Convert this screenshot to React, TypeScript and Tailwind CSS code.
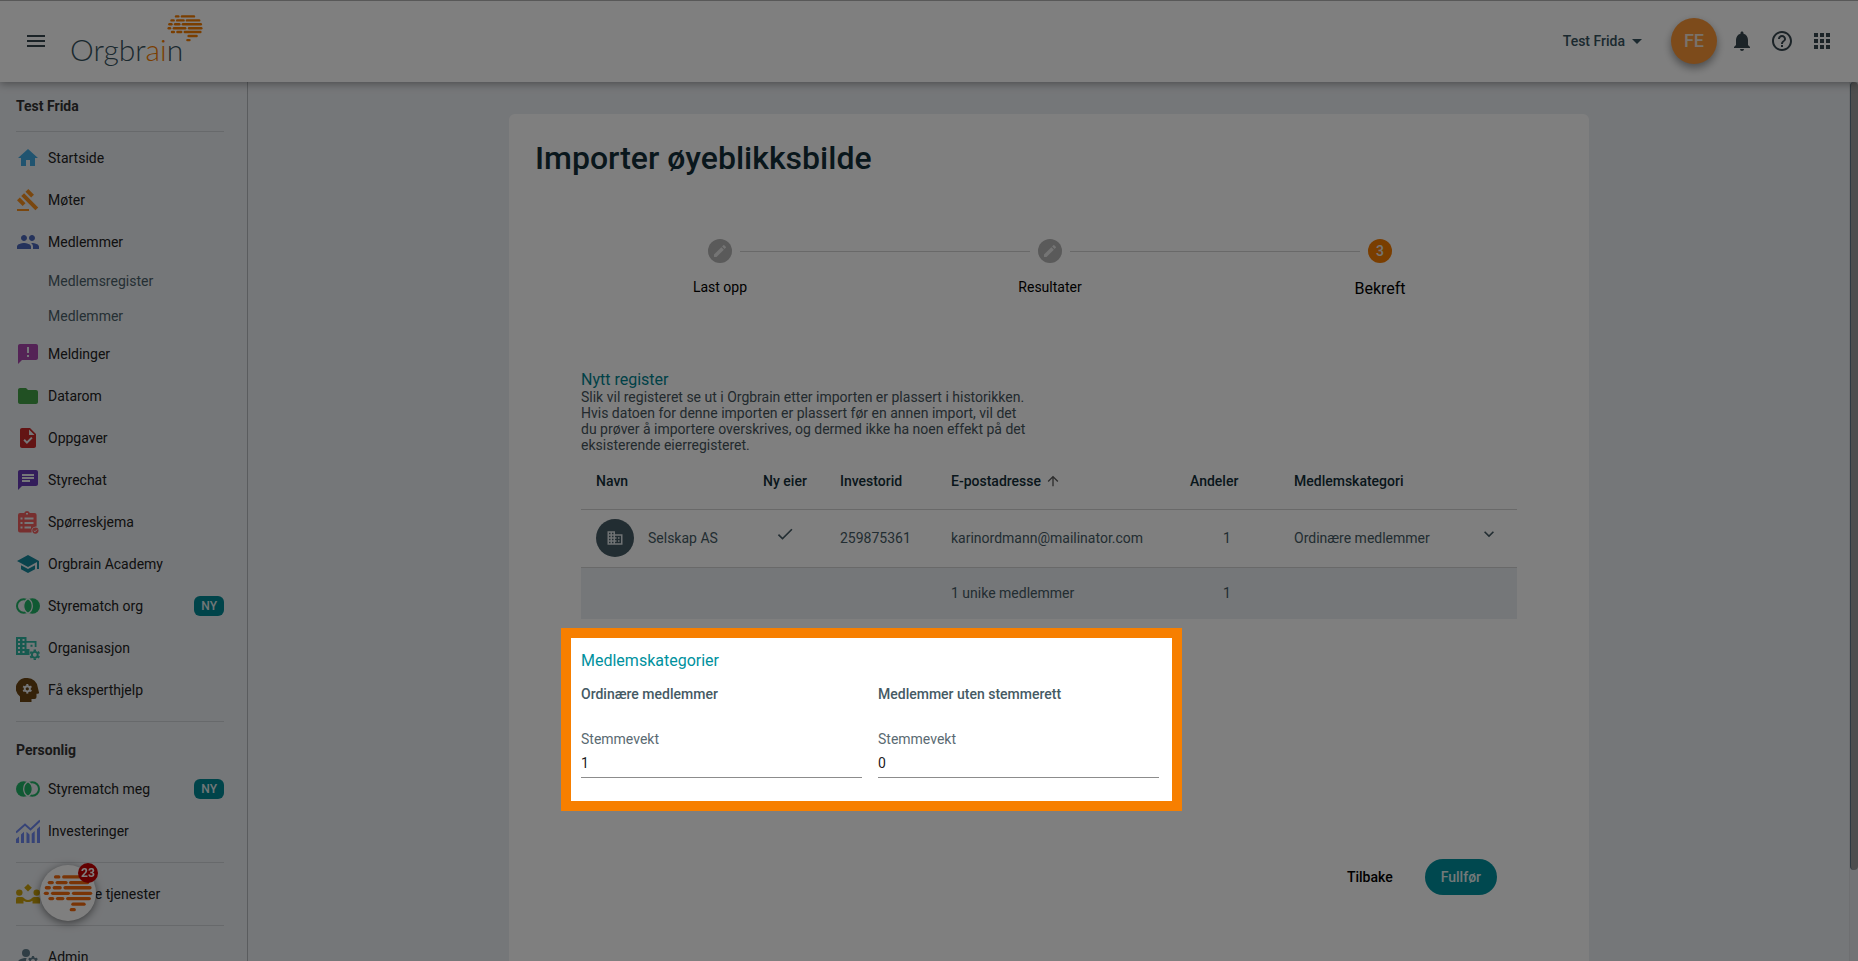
import { useState } from 'react'
import type { ComponentType, ReactNode } from 'react'
import {
  MdApps,
  MdArrowDropDown,
  MdArrowUpward,
  MdAnnouncement,
  MdChat,
  MdCheck,
  MdCreate,
  MdDomain,
  MdExpandMore,
  MdFolder,
  MdGavel,
  MdHelpOutline,
  MdHome,
  MdManageAccounts,
  MdMenu,
  MdNotifications,
  MdPeople,
  MdSchool,
  MdTask,
} from 'react-icons/md'

type Icon = ComponentType<{ className?: string }>

interface NavItem {
  label: string
  icon: Icon
  color: string
  isNew?: boolean
  children?: string[]
}

const ORG_NAV: NavItem[] = [
  { label: 'Startside', icon: MdHome, color: 'text-[#40a9e0]' },
  { label: 'Møter', icon: MdGavel, color: 'text-[#f58f1e]' },
  {
    label: 'Medlemmer',
    icon: MdPeople,
    color: 'text-[#4a67b8]',
    children: ['Medlemsregister', 'Medlemmer'],
  },
  { label: 'Meldinger', icon: MdAnnouncement, color: 'text-[#a846ac]' },
  { label: 'Datarom', icon: MdFolder, color: 'text-[#43a047]' },
  { label: 'Oppgaver', icon: MdTask, color: 'text-[#c62828]' },
  { label: 'Styrechat', icon: MdChat, color: 'text-[#673ab7]' },
  { label: 'Spørreskjema', icon: SurveyIcon, color: 'text-[#ef5f5f]' },
  { label: 'Orgbrain Academy', icon: MdSchool, color: 'text-[#14869a]' },
  { label: 'Styrematch org', icon: MatchIcon, color: 'text-[#21b266]', isNew: true },
  { label: 'Organisasjon', icon: OrgSettingsIcon, color: 'text-[#2fb5a0]' },
  { label: 'Få eksperthjelp', icon: ExpertIcon, color: 'text-[#6b4412]' },
]

const PERSONAL_NAV: NavItem[] = [
  { label: 'Styrematch meg', icon: MatchMeIcon, color: 'text-[#21b266]', isNew: true },
  { label: 'Investeringer', icon: InvestIcon, color: 'text-[#6c87ee]' },
]

const STEPS = [
  { label: 'Last opp', done: true },
  { label: 'Resultater', done: true },
  { label: 'Bekreft', done: false },
]

const CATEGORIES = [
  { id: 'ordinary', name: 'Ordinære medlemmer', weight: '1' },
  { id: 'non-voting', name: 'Medlemmer uten stemmerett', weight: '0' },
]

export default function App() {
  return (
    <div className="flex h-screen flex-col overflow-hidden bg-[#ebeef2] font-[Roboto,sans-serif] text-sm text-[#333]">
      <Header />
      <div className="flex min-h-0 flex-1">
        <Sidebar />
        <main className="flex min-w-0 flex-1 justify-center overflow-hidden pt-8 pl-px">
          <ImportCard />
        </main>
        <div className="w-[9px] shrink-0 border-l border-[#dcdfe2] bg-[#e4e7ea]">
          <div className="h-[788px] rounded-md border-l border-[#5f7280] bg-[#9c9c9c]" />
        </div>
      </div>
      <ChatBubble />
      {/* Dims everything except the highlighted section */}
      <div className="pointer-events-none fixed inset-0 z-40 bg-black/50" />
    </div>
  )
}

function Header() {
  return (
    <header className="relative z-10 flex h-[82px] shrink-0 items-center justify-between border-t border-[#b0b0b0] bg-white px-6 pb-px text-[#37474f] shadow-[0_2px_8px_rgba(0,0,0,0.35)]">
      <div className="flex items-center">
        <button type="button" aria-label="Meny">
          <MdMenu className="size-6" />
        </button>
        <Logo />
      </div>
      <div className="flex items-center gap-4">
        <button type="button" className="mr-[6px] flex items-center font-medium text-[#37535e]">
          Test Frida
          <MdArrowDropDown className="size-6" />
        </button>
        <button
          type="button"
          className="-mr-[3px] size-[46px] rounded-full bg-[#fb9637] text-lg font-medium text-[#f3e4d6] shadow-[0_4px_8px_rgba(0,0,0,0.4)]"
        >
          FE
        </button>
        <button type="button" aria-label="Varsler">
          <MdNotifications className="size-6" />
        </button>
        <button type="button" aria-label="Hjelp">
          <MdHelpOutline className="size-6" />
        </button>
        <button type="button" aria-label="Apper">
          <MdApps className="size-6" />
        </button>
      </div>
    </header>
  )
}

function Logo() {
  return (
    <a href="#" className="relative ml-[22px] block pt-4" aria-label="Orgbrain">
      <span className="font-[Lato,sans-serif] text-[30px] leading-9 font-light text-[#37535e]">
        Orgbr<span className="text-[#f57c00]">ai</span>n
      </span>
      <BrainMark className="absolute -top-px left-[97px] h-7 w-9 text-[#f57c00]" />
    </a>
  )
}

function Sidebar() {
  return (
    <aside className="w-62 shrink-0 overflow-hidden border-r border-[#b4b8bc] pr-[23px] pl-4">
      <h2 className="border-b border-[#cfd2d6] pt-[14px] pb-[15px] leading-5 font-bold">
        Test Frida
      </h2>
      <nav className="mt-[5px]">
        {ORG_NAV.map((item) => (
          <NavRow key={item.label} item={item} />
        ))}
      </nav>
      <h2 className="mt-[10px] border-t border-[#cfd2d6] pt-[18px] pb-2 leading-5 font-bold">
        Personlig
      </h2>
      <nav>
        {PERSONAL_NAV.map((item) => (
          <NavRow key={item.label} item={item} />
        ))}
      </nav>
      <Section>
        <NavRow item={{ label: 'Eksterne tjenester', icon: ServicesIcon, color: 'text-[#c8a00c]' }} />
      </Section>
      <Section>
        <NavRow item={{ label: 'Admin', icon: MdManageAccounts, color: 'text-[#607d8b]' }} />
      </Section>
    </aside>
  )
}

function Section({ children }: { children: ReactNode }) {
  return <div className="mt-[10px] border-t border-[#cfd2d6] pt-[10px]">{children}</div>
}

function NavRow({ item }: { item: NavItem }) {
  const Icon = item.icon
  return (
    <>
      <a
        href="#"
        className="flex h-[42px] items-center gap-2 whitespace-nowrap text-[#222]"
      >
        <Icon className={`size-6 shrink-0 ${item.color}`} />
        {item.label}
        {item.isNew && (
          <span className="ml-auto rounded-md bg-[#008895] px-[7px] text-xs leading-5 font-medium text-[#e4eef0]">
            NY
          </span>
        )}
      </a>
      {item.children?.map((label) => (
        <a key={label} href="#" className="flex h-[35px] items-center pl-8 text-[#4a5f69]">
          {label}
        </a>
      ))}
    </>
  )
}

function ImportCard() {
  return (
    <div className="w-[1080px] max-w-full rounded-t-md bg-white">
      <h1 className="px-[26px] pt-6 text-[32px] leading-10 font-medium text-[#132e38]">
        Importer øyeblikksbilde
      </h1>
      <Stepper />
      <div className="mt-[71px] px-[72px]">
        <h3 className="text-base leading-[19px] text-[#00838f]">Nytt register</h3>
        <p className="max-w-[450px] leading-4 text-[#46545c]">
          Slik vil registeret se ut i Orgbrain etter importen er plassert i historikken. Hvis
          datoen for denne importen er plassert før en annen import, vil det du prøver å importere
          overskrives, og dermed ikke ha noen effekt på det eksisterende eierregisteret.
        </p>
        <RegisterTable />
        <CategoryWeights />
        <div className="mt-12 flex justify-end gap-8 pr-5 font-medium">
          <button type="button" className="h-9 text-black">
            Tilbake
          </button>
          <button type="button" className="h-9 rounded-full bg-[#00919e] px-4 text-[#e6f2f3]">
            Fullfør
          </button>
        </div>
      </div>
    </div>
  )
}

function Stepper() {
  return (
    <ol className="mt-[61px] flex h-[60px] items-start pr-[197px] pl-[199px] text-black">
      {STEPS.map((step, i) => (
        <li key={step.label} className={i > 0 ? 'flex flex-1' : 'flex'}>
          {i > 0 && <div className="mx-2 mt-3 h-px flex-1 bg-[#d2d2d2]" />}
          <div className="flex w-6 flex-col items-center">
            <span
              className={`grid size-6 place-items-center rounded-full font-medium text-[#e8e8e8] ${
                step.done ? 'bg-[#b4b4b4]' : 'bg-[#f57c00]'
              }`}
            >
              {step.done ? <MdCreate className="size-4" /> : i + 1}
            </span>
            <span
              className={`mt-[14px] whitespace-nowrap ${
                step.done ? 'leading-5' : 'text-base leading-6'
              }`}
            >
              {step.label}
            </span>
          </div>
        </li>
      ))}
    </ol>
  )
}

function RegisterTable() {
  return (
    <table className="w-full table-fixed text-left text-[#455a64]">
      <colgroup>
        <col />
        <col className="w-[90px]" />
        <col className="w-[111px]" />
        <col className="w-[239px]" />
        <col className="w-[104px]" />
        <col className="w-[177px]" />
        <col className="w-[56px]" />
      </colgroup>
      <thead>
        <tr className="h-14 border-b border-[#d2d2d2] text-[#132e38]">
          <th className="pl-[15px] font-medium">Navn</th>
          <th className="text-center font-medium">Ny eier</th>
          <th className="pl-[10px] font-medium">Investorid</th>
          <th className="pl-[10px] font-medium">
            <button type="button" className="flex items-center gap-1 font-medium">
              E-postadresse
              <MdArrowUpward className="size-4 text-[#5a5a5a]" />
            </button>
          </th>
          <th className="pl-[10px] font-medium">Andeler</th>
          <th className="pl-[10px] font-medium">Medlemskategori</th>
          <th />
        </tr>
      </thead>
      <tbody>
        <tr className="h-[58px] border-b border-[#d2d2d2]">
          <td className="pl-[15px]">
            <div className="flex items-center gap-[14px]">
              <span className="grid size-[38px] place-items-center rounded-full bg-[#455a64] text-[#dfe5e8]">
                <MdDomain className="size-[18px]" />
              </span>
              Selskap AS
            </div>
          </td>
          <td>
            <MdCheck className="mx-auto mb-2 size-5" />
          </td>
          <td className="pl-[10px]">259875361</td>
          <td className="pl-[10px]">karinordmann@mailinator.com</td>
          <td className="pl-[43px]">1</td>
          <td className="pl-[10px]">Ordinære medlemmer</td>
          <td className="text-center">
            <button type="button" aria-label="Vis mer" className="mb-2 align-middle">
              <MdExpandMore className="size-5" />
            </button>
          </td>
        </tr>
      </tbody>
      <tfoot>
        <tr className="h-[52px] bg-[#ebeef2]">
          <td colSpan={3} />
          <td className="pl-[10px]">1 unike medlemmer</td>
          <td className="pl-[43px]">1</td>
          <td colSpan={2} />
        </tr>
      </tfoot>
    </table>
  )
}

function CategoryWeights() {
  const [weights, setWeights] = useState(CATEGORIES.map((c) => c.weight))

  return (
    <section className="relative z-50 mt-[9px] -ml-5 w-[621px] border-10 border-[#f77f00] bg-white pt-[13px] pr-[13px] pb-[23px] pl-[10px]">
      <h3 className="text-base leading-5 text-[#00919e]">Medlemskategorier</h3>
      <div className="mt-[13px] grid grid-cols-2 gap-4">
        {CATEGORIES.map((category, i) => (
          <div key={category.id}>
            <h4 className="leading-5 font-medium text-[#455a64]">{category.name}</h4>
            <label
              htmlFor={category.id}
              className="mt-[25px] block leading-5 text-[#5a6a72]"
            >
              Stemmevekt
            </label>
            <input
              id={category.id}
              value={weights[i]}
              onChange={(e) =>
                setWeights((w) => w.map((v, j) => (j === i ? e.target.value : v)))
              }
              className="mt-1 block h-[25px] w-full border-b border-[#8c8c8c] pb-1 text-black/90 outline-none"
            />
          </div>
        ))}
      </div>
    </section>
  )
}

function ChatBubble() {
  return (
    <button
      type="button"
      aria-label="Åpne chat"
      className="fixed bottom-10 left-10 z-20 grid size-14 place-items-center rounded-full bg-white shadow-[0_2px_8px_rgba(0,0,0,0.5)]"
    >
      <BrainMark className="h-[38px] w-[50px] text-[#f2690d]" />
      <span className="absolute -top-[2px] -right-[2px] size-5 rounded-full bg-[#c60000] text-center text-xs leading-5 font-bold text-white">
        23
      </span>
    </button>
  )
}

function BrainMark({ className }: { className?: string }) {
  // [x1, x2, y] for every dash
  const dashes = [
    [36, 50, 9], [61, 116, 9],
    [17, 30, 26], [41, 72, 26], [82, 138, 26],
    [8, 21, 42], [32, 54, 42], [65, 145, 42],
    [5, 15, 59], [27, 79, 59], [91, 147, 59],
    [19, 31, 75], [42, 62, 75], [73, 143, 75],
    [89, 127, 92],
    [84, 97, 109],
  ]
  return (
    <svg viewBox="0 0 152 116" className={className} aria-hidden="true">
      <g stroke="currentColor" strokeWidth="10" strokeLinecap="round">
        {dashes.map(([x1, x2, y]) => (
          <path key={`${x1}-${y}`} d={`M${x1 + 2} ${y}H${x2 - 2}`} />
        ))}
      </g>
    </svg>
  )
}

function SurveyIcon({ className }: { className?: string }) {
  return (
    <svg viewBox="0 0 24 24" className={className} aria-hidden="true">
      <path
        fill="currentColor"
        fillRule="evenodd"
        d="M4 3h4.200a3 3 0 0 1 5.600 0H18.600a2 2 0 0 1 2 2v11.500a4.600 4.600 0 0 0-5 6H4a2 2 0 0 1-2-2V5a2 2 0 0 1 2-2zM10 3h2v1.500h-2zM4.500 7.500v2h2v-2zm0 4.500v2h2v-2zm0 4.500v2h2v-2zM8.500 7.500v2h9v-2zm0 4.500v2h9v-2zm0 4.500v2h6.500v-2z"
      />
      <circle cx="19.400" cy="20.600" r="3.100" fill="currentColor" />
      <path d="M17.800 20.700l1.200 1.100 2.100-2.300" fill="none" stroke="#ebeef2" />
    </svg>
  )
}

function MatchIcon({ className }: { className?: string }) {
  return (
    <svg viewBox="0 0 24 24" className={className} aria-hidden="true">
      <circle cx="7.700" cy="12" r="6.700" fill="none" stroke="currentColor" strokeWidth="2" />
      <circle cx="16.300" cy="12" r="7.700" fill="currentColor" />
      <path
        d="M12 4.600a8.500 8.500 0 0 1 0 14.800 8.500 8.500 0 0 1 0-14.800z"
        fill="currentColor"
        stroke="#ebeef2"
        strokeWidth="1.300"
      />
    </svg>
  )
}

function MatchMeIcon({ className }: { className?: string }) {
  return <MatchIcon className={`-scale-x-100 ${className ?? ''}`} />
}

function OrgSettingsIcon({ className }: { className?: string }) {
  const teeth = [0, 60, 120, 180, 240, 300]
  return (
    <svg viewBox="0 0 24 24" className={className} aria-hidden="true">
      <path
        fill="currentColor"
        fillRule="evenodd"
        d="M0 1h10.500v4H20.500v6h-1.800V6.800H10.500v6.200h3v6H0zM2 3v2h2V3zm4.500 0v2h2V3zM2 7v2h2V7zm4.500 0v2h2V7zM2 11v2h2v-2zm4.500 0v2h2v-2zM2 15v2h2v-2zm4.500 0v2h2v-2zM14.500 8.800h2v2h-2z"
      />
      <g stroke="currentColor" fill="none">
        <circle cx="18.800" cy="18.800" r="2.900" strokeWidth="1.900" />
        {teeth.map((deg) => (
          <path key={deg} d="M18.800 15.200V13.500" strokeWidth="2.400" transform={`rotate(${deg} 18.800 18.800)`} />
        ))}
      </g>
    </svg>
  )
}

function ExpertIcon({ className }: { className?: string }) {
  const teeth = [0, 60, 120, 180, 240, 300]
  return (
    <svg viewBox="0 0 24 24" className={className} aria-hidden="true">
      <path
        fill="currentColor"
        d="M11.500 0a10.300 10.300 0 0 1 10.300 9.500l1.200 5c.2.700-.2 1.200-.8 1.200h-1.700V19a2 2 0 0 1-2 2h-3v3H4v-5.500A10.300 10.300 0 0 1 11.500 0z"
      />
      <g stroke="#ebeef2" fill="none">
        <circle cx="11.300" cy="10.800" r="2.600" strokeWidth="1.900" />
        {teeth.map((deg) => (
          <path key={deg} d="M11.300 7.700V6" strokeWidth="2" transform={`rotate(${deg} 11.300 10.800)`} />
        ))}
      </g>
    </svg>
  )
}

function InvestIcon({ className }: { className?: string }) {
  return (
    <svg viewBox="0 0 24 24" className={className} aria-hidden="true">
      <path d="M0 13.500L9 5.500l5.500 5L24 1.500" fill="none" stroke="currentColor" strokeWidth="2" />
      <path
        fill="currentColor"
        d="M0 20l3-2.500V24H0zM5 15.500l3-2.700V24H5zM10.500 12.800l3 2.700V24h-3zM15.700 14.700l3-2.700V24h-3zM21 10l3-2.800V24h-3z"
      />
    </svg>
  )
}

function ServicesIcon({ className }: { className?: string }) {
  return (
    <svg viewBox="0 0 24 24" className={className} fill="currentColor" aria-hidden="true">
      <path d="M12 2l3.800 3.800L12 9.600 8.200 5.800z" />
      <circle cx="3.300" cy="10.600" r="3.200" />
      <circle cx="20.700" cy="10.600" r="3.200" />
      <path d="M0 21.500v-4.500a2 2 0 0 1 2-2h4c2 0 2.500 3 6 3s4-3 6-3h4a2 2 0 0 1 2 2v4.500h-7.500v-2.700c-2.500 1.700-6.500 1.700-9 0v2.700z" />
    </svg>
  )
}
